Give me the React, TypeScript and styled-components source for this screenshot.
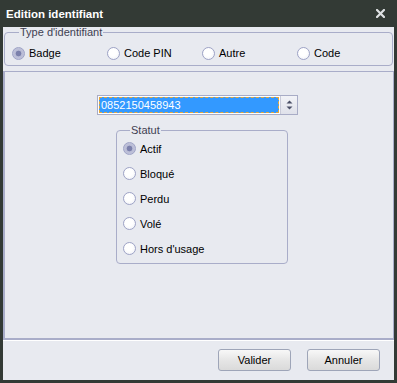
import React from "react";
import styled, { createGlobalStyle } from "styled-components";

const GlobalStyle = createGlobalStyle`
  html, body {
    margin: 0;
    padding: 0;
    background: #333a35;
  }
  body {
    font-family: "Liberation Sans", Arial, sans-serif;
  }
`;

const Window = styled.div`
  width: 397px;
  height: 383px;
  box-sizing: border-box;
  background: #333a35;
  padding: 0 3px 3px 3px;
  display: flex;
  flex-direction: column;
`;

const TitleBar = styled.div`
  height: 27px;
  flex: none;
  display: flex;
  align-items: center;
  justify-content: space-between;
  padding: 0 9px 0 3px;
  color: #ffffff;
  font-weight: bold;
  font-size: 11.5px;
`;

const CloseIcon = styled.svg`
  width: 9px;
  height: 9px;
  display: block;
`;

const Client = styled.div`
  flex: 1;
  background: #e8eaf0;
  display: flex;
  flex-direction: column;
  font-size: 11px;
  color: #000;
`;

const GroupBox = styled.fieldset<{ $width?: number }>`
  margin: 0;
  padding: 0;
  min-width: 0;
  border: 1px solid #a9adc9;
  border-radius: 4px;
  ${(p) => (p.$width ? `width: ${p.$width}px; box-sizing: border-box;` : "")}
`;

const Legend = styled.legend`
  margin-left: 7px;
  padding: 0 1px;
  font-size: 11px;
  line-height: 11px;
  color: #3e3e52;
`;

const TypeGroup = styled(GroupBox)`
  margin: 0 1px;
  padding: 7px 0 4px 7px;
`;

const TypeRow = styled.div`
  display: grid;
  grid-template-columns: repeat(4, 95px);
  height: 16px;
`;

const RadioItem = styled.label<{ $height?: number }>`
  display: flex;
  align-items: center;
  gap: 4px;
  height: ${(p) => p.$height ?? 16}px;
  white-space: nowrap;
`;

const RadioCircle = styled.span<{ $checked?: boolean }>`
  width: 13px;
  height: 13px;
  flex: none;
  box-sizing: border-box;
  border-radius: 50%;
  border: 1px solid #9ea3c6;
  background: ${(p) =>
    p.$checked
      ? "radial-gradient(circle, #7b80ab 0 2.5px, #b8bbd5 3.2px, #c7c9de 100%)"
      : "radial-gradient(circle at 45% 40%, #ffffff 40%, #eceef5 100%)"};
`;

const Panel = styled.div`
  flex: 1;
  margin-top: 5px;
  border: 1px solid #a9adc9;
  border-left-width: 2px;
  border-bottom-width: 2px;
  padding: 23px 0 0 92px;
  display: flex;
  flex-direction: column;
  align-items: flex-start;
`;

const Combo = styled.div`
  width: 201px;
  height: 20px;
  box-sizing: border-box;
  border: 1px solid #a8acc6;
  background: #ffffff;
  display: flex;
`;

const ComboText = styled.div`
  flex: 1;
  margin: 1px;
  background: #3399ff;
  color: #ffffff;
  font-size: 11px;
  line-height: 14px;
  padding-left: 1px;
  border: 1px dashed #e4a63c;
  box-sizing: border-box;
`;

const SpinButton = styled.div`
  width: 16px;
  border-left: 1px solid #c8cad8;
  background: linear-gradient(#f2f3f7, #dfe1ea);
  display: flex;
  align-items: center;
  justify-content: center;
`;

const StatusGroup = styled(GroupBox)`
  margin: 10px 0 0 19px;
  padding: 0 0 2px 6px;
`;

const Separator = styled.div`
  height: 1px;
  background: #ffffff;
  flex: none;
`;

const ButtonBar = styled.div`
  height: 39px;
  flex: none;
  display: flex;
  justify-content: flex-end;
  align-items: flex-start;
  gap: 16px;
  padding: 8px 14px 0 0;
  box-sizing: border-box;
`;

const Button = styled.button`
  width: 73px;
  height: 22px;
  border: 1px solid #9ea5b8;
  border-radius: 3px;
  background: linear-gradient(#f8f8f8, #e6e6e6 50%, #dadada);
  font-family: "Liberation Sans", Arial, sans-serif;
  font-size: 11px;
  color: #000;
  padding: 0;
`;

const types = [
  { label: "Badge", checked: true },
  { label: "Code PIN" },
  { label: "Autre" },
  { label: "Code" },
];

const statuses = [
  { label: "Actif", checked: true },
  { label: "Bloqué" },
  { label: "Perdu" },
  { label: "Volé" },
  { label: "Hors d'usage" },
];

const App = () => {
  return (
    <Window>
      <GlobalStyle />
      <TitleBar>
        <span>Edition identifiant</span>
        <CloseIcon viewBox="0 0 9 9">
          <path
            d="M1 1 L8 8 M8 1 L1 8"
            stroke="#dfe1e3"
            strokeWidth="2.2"
            strokeLinecap="square"
          />
        </CloseIcon>
      </TitleBar>
      <Client>
        <TypeGroup>
          <Legend>Type d'identifiant</Legend>
          <TypeRow>
            {types.map((t) => (
              <RadioItem key={t.label}>
                <RadioCircle $checked={t.checked} />
                {t.label}
              </RadioItem>
            ))}
          </TypeRow>
        </TypeGroup>
        <Panel>
          <Combo>
            <ComboText>0852150458943</ComboText>
            <SpinButton>
              <svg width="7" height="10" viewBox="0 0 7 10">
                <path d="M3.5 0.5 L6.5 3.5 L0.5 3.5 Z" fill="#4a4f66" />
                <path d="M3.5 9.5 L6.5 6.5 L0.5 6.5 Z" fill="#4a4f66" />
              </svg>
            </SpinButton>
          </Combo>
          <StatusGroup $width={172}>
            <Legend>Statut</Legend>
            {statuses.map((s) => (
              <RadioItem key={s.label} $height={25}>
                <RadioCircle $checked={s.checked} />
                {s.label}
              </RadioItem>
            ))}
          </StatusGroup>
        </Panel>
        <Separator />
        <ButtonBar>
          <Button>Valider</Button>
          <Button>Annuler</Button>
        </ButtonBar>
      </Client>
    </Window>
  );
};

export default App;
